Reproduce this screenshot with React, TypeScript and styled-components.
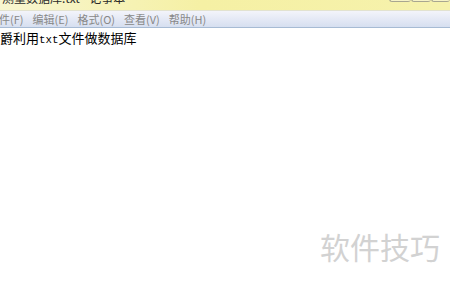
import * as React from "react";
import styled, { createGlobalStyle } from "styled-components";

const GlobalStyle = createGlobalStyle`
  html, body {
    margin: 0;
    padding: 0;
    width: 450px;
    height: 281px;
    overflow: hidden;
    background: #ffffff;
  }
  #root {
    height: 281px;
  }
`;

const Window = styled.div`
  position: relative;
  width: 450px;
  height: 281px;
  display: flex;
  flex-direction: column;
  overflow: hidden;
  font-family: "Noto Sans CJK SC", "Noto Sans", sans-serif;
`;

const TitleBar = styled.div`
  height: 10px;
  display: flex;
  justify-content: space-between;
  align-items: flex-start;
  overflow: hidden;
  background: linear-gradient(to right, #f8f6d0 0%, #f5f0a4 45%, #f6f2ac 100%);
`;

const TitleText = styled.div`
  margin-top: -9px;
  padding-left: 2px;
  font-size: 12px;
  line-height: 14px;
  color: #2a2a2a;
  white-space: nowrap;
`;

const Controls = styled.div`
  display: flex;
  margin-top: -12px;
`;

const ControlBox = styled.div<{ $w: number }>`
  width: ${(p) => p.$w}px;
  height: 14px;
  border: 1px solid #a8a690;
  border-top: none;
  border-right: none;
  border-radius: 0 0 3px 3px;
  box-sizing: border-box;
  background: #f6f3c6;
`;

const MenuBar = styled.div`
  height: 16px;
  display: flex;
  align-items: center;
  gap: 9px;
  margin-left: -12px;
  background: linear-gradient(to bottom, #f3f4fa 0%, #e6eaf6 45%, #d6dff0 100%);
  border-top: 1px solid #e2e2d0;
  border-bottom: 1px solid #a7bbd4;
`;

const MenuItem = styled.span`
  font-size: 11px;
  line-height: 16px;
  color: #888888;
  white-space: nowrap;
`;

const Editor = styled.div`
  flex: 1;
  padding: 1px 0 0 0;
  font-size: 13px;
  line-height: 17px;
  color: #000000;
  white-space: nowrap;
`;

const Ascii = styled.span`
  font-family: "Liberation Mono", "DejaVu Sans Mono", monospace;
  font-size: 10.8px;
`;

const Watermark = styled.div`
  position: absolute;
  right: 10px;
  bottom: 17px;
  font-size: 30px;
  line-height: 36px;
  color: #d2d2d2;
`;

const menus = ["文件(F)", "编辑(E)", "格式(O)", "查看(V)", "帮助(H)"];

const App = () => {
  return (
    <Window>
      <GlobalStyle />
      <TitleBar>
        <TitleText>测量数据库.txt - 记事本</TitleText>
        <Controls>
          <ControlBox $w={22} />
          <ControlBox $w={20} />
          <ControlBox $w={19} />
        </Controls>
      </TitleBar>
      <MenuBar>
        {menus.map((m) => (
          <MenuItem key={m}>{m}</MenuItem>
        ))}
      </MenuBar>
      <Editor>
        爵利用<Ascii>txt</Ascii>文件做数据库
      </Editor>
      <Watermark>软件技巧</Watermark>
    </Window>
  );
};

export default App;
